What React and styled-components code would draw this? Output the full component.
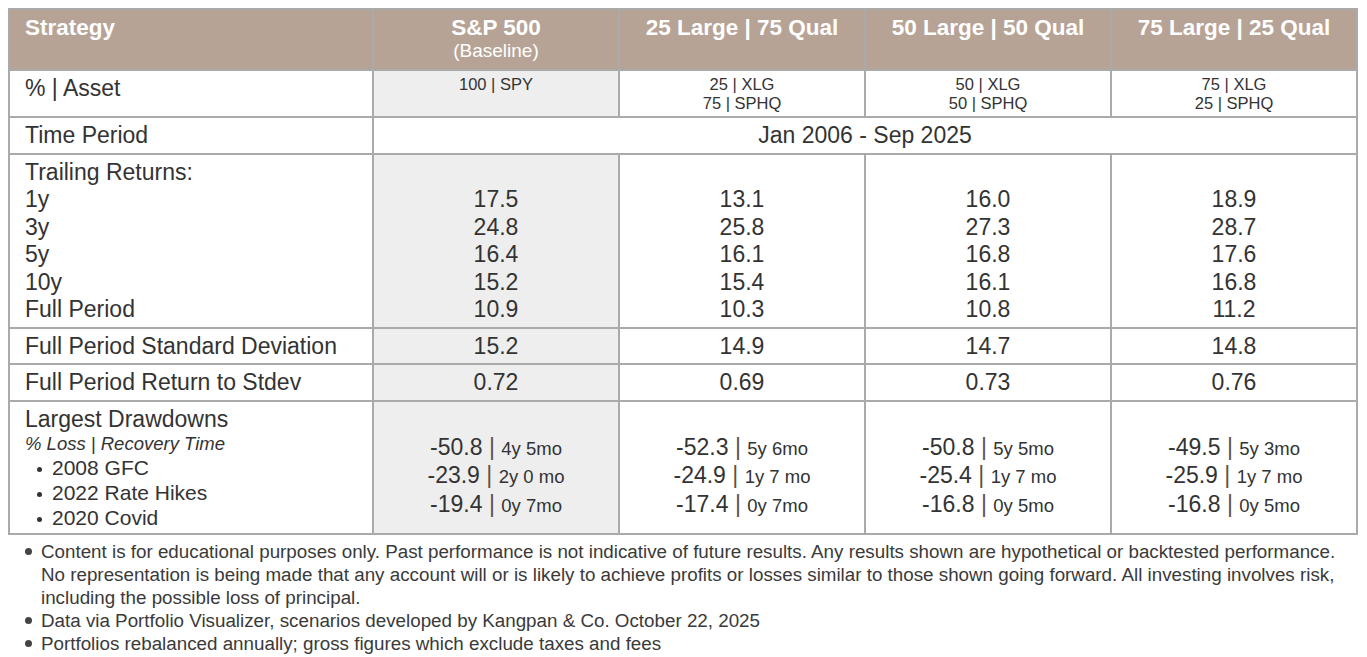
import styled, { createGlobalStyle } from "styled-components";

const GlobalStyle = createGlobalStyle`
  body {
    margin: 8px;
    background: #ffffff;
    font-family: "Liberation Sans", Arial, sans-serif;
    color: #333333;
  }
`;

const strategies = [
  {
    name: "S&P 500",
    sub: "(Baseline)",
    assets: ["100 | SPY"],
    returns: ["17.5", "24.8", "16.4", "15.2", "10.9"],
    stdev: "15.2",
    ratio: "0.72",
    drawdowns: [
      ["-50.8", "4y 5mo"],
      ["-23.9", "2y 0 mo"],
      ["-19.4", "0y 7mo"],
    ],
    baseline: true,
  },
  {
    name: "25 Large | 75 Qual",
    assets: ["25 | XLG", "75 | SPHQ"],
    returns: ["13.1", "25.8", "16.1", "15.4", "10.3"],
    stdev: "14.9",
    ratio: "0.69",
    drawdowns: [
      ["-52.3", "5y 6mo"],
      ["-24.9", "1y 7 mo"],
      ["-17.4", "0y 7mo"],
    ],
  },
  {
    name: "50 Large | 50 Qual",
    assets: ["50 | XLG", "50 | SPHQ"],
    returns: ["16.0", "27.3", "16.8", "16.1", "10.8"],
    stdev: "14.7",
    ratio: "0.73",
    drawdowns: [
      ["-50.8", "5y 5mo"],
      ["-25.4", "1y 7 mo"],
      ["-16.8", "0y 5mo"],
    ],
  },
  {
    name: "75 Large | 25 Qual",
    assets: ["75 | XLG", "25 | SPHQ"],
    returns: ["18.9", "28.7", "17.6", "16.8", "11.2"],
    stdev: "14.8",
    ratio: "0.76",
    drawdowns: [
      ["-49.5", "5y 3mo"],
      ["-25.9", "1y 7 mo"],
      ["-16.8", "0y 5mo"],
    ],
  },
];

const periods = ["1y", "3y", "5y", "10y", "Full Period"];
const events = ["2008 GFC", "2022 Rate Hikes", "2020 Covid"];

const notes = [
  "Content is for educational purposes only. Past performance is not indicative of future results. Any results shown are hypothetical or backtested performance. No representation is being made that any account will or is likely to achieve profits or losses similar to those shown going forward. All investing involves risk, including the possible loss of principal.",
  "Data via Portfolio Visualizer, scenarios developed by Kangpan & Co. October 22, 2025",
  "Portfolios rebalanced annually; gross figures which exclude taxes and fees",
];

const App = () => (
  <>
    <GlobalStyle />
    <Table>
      <colgroup>
        <col style={{ width: 364 }} />
        <col style={{ width: 246 }} />
        <col style={{ width: 246 }} />
        <col style={{ width: 246 }} />
        <col style={{ width: 246 }} />
      </colgroup>
      <thead>
        <tr>
          <HeadCell $left>Strategy</HeadCell>
          {strategies.map((s) => (
            <HeadCell key={s.name}>
              {s.name}
              {s.sub && <HeadSub>{s.sub}</HeadSub>}
            </HeadCell>
          ))}
        </tr>
      </thead>
      <tbody>
        <tr>
          <Label>% | Asset</Label>
          {strategies.map((s) => (
            <AssetCell key={s.name} $shade={s.baseline}>
              {s.assets.map((a) => (
                <div key={a}>{a}</div>
              ))}
            </AssetCell>
          ))}
        </tr>
        <tr>
          <Label>Time Period</Label>
          <ValueCell colSpan={4}>Jan 2006 - Sep 2025</ValueCell>
        </tr>
        <tr>
          <Label>
            <Line>Trailing Returns:</Line>
            {periods.map((p) => (
              <Line key={p}>{p}</Line>
            ))}
          </Label>
          {strategies.map((s) => (
            <ValueCell key={s.name} $shade={s.baseline}>
              <Line>&nbsp;</Line>
              {s.returns.map((r, i) => (
                <Line key={i}>{r}</Line>
              ))}
            </ValueCell>
          ))}
        </tr>
        <tr>
          <Label>Full Period Standard Deviation</Label>
          {strategies.map((s) => (
            <ValueCell key={s.name} $shade={s.baseline}>
              {s.stdev}
            </ValueCell>
          ))}
        </tr>
        <tr>
          <Label>Full Period Return to Stdev</Label>
          {strategies.map((s) => (
            <ValueCell key={s.name} $shade={s.baseline}>
              {s.ratio}
            </ValueCell>
          ))}
        </tr>
        <tr>
          <Label>
            <Line>Largest Drawdowns</Line>
            <SubLabel>% Loss | Recovery Time</SubLabel>
            {events.map((e) => (
              <EventItem key={e}>{e}</EventItem>
            ))}
          </Label>
          {strategies.map((s) => (
            <DrawdownCell key={s.name} $shade={s.baseline}>
              {s.drawdowns.map(([loss, time]) => (
                <Line key={loss + time}>
                  {loss} <Pipe>|</Pipe> <Small>{time}</Small>
                </Line>
              ))}
            </DrawdownCell>
          ))}
        </tr>
      </tbody>
    </Table>
    <Notes>
      {notes.map((n) => (
        <Note key={n}>{n}</Note>
      ))}
    </Notes>
  </>
);

export default App;

const Table = styled.table`
  width: 1349px;
  table-layout: fixed;
  border-collapse: collapse;
  border: 2px solid #aaaaaa;
  color: #333333;
`;

const HeadCell = styled.th`
  background-color: #b6a396;
  color: #ffffff;
  font-size: 22.5px;
  font-weight: 700;
  line-height: 26px;
  padding: 5px 15px 8px;
  vertical-align: top;
  text-align: ${(p) => (p.$left ? "left" : "center")};
  border: 2px solid #aaaaaa;
`;

const HeadSub = styled.div`
  font-size: 19px;
  font-weight: 400;
  line-height: 20px;
`;

const Label = styled.td`
  font-size: 23px;
  line-height: 27.5px;
  padding: 4px 15px 3px;
  vertical-align: top;
  text-align: left;
  border: 2px solid #aaaaaa;
`;

const ValueCell = styled.td`
  font-size: 23px;
  line-height: 27.5px;
  padding: 4px 10px 3px;
  vertical-align: top;
  text-align: center;
  background-color: ${(p) => (p.$shade ? "#eeeeee" : "#ffffff")};
  border: 2px solid #aaaaaa;
`;

const AssetCell = styled(ValueCell)`
  font-size: 16.5px;
  line-height: 19px;
  padding-top: 4px;
`;

const DrawdownCell = styled(ValueCell)`
  padding-top: 32px;
`;

const Line = styled.div`
  white-space: nowrap;
`;

const SubLabel = styled.div`
  font-size: 18.5px;
  font-style: italic;
  line-height: 22px;
`;

const EventItem = styled.div`
  font-size: 21px;
  line-height: 25px;
  padding-left: 27px;
  position: relative;

  &::before {
    content: "";
    position: absolute;
    left: 12px;
    top: 12px;
    width: 5px;
    height: 5px;
    border-radius: 50%;
    background: #333333;
  }
`;

const Pipe = styled.span`
  color: #5e5048;
`;

const Small = styled.span`
  font-size: 18.5px;
`;

const Notes = styled.ul`
  list-style: none;
  width: 1335px;
  box-sizing: border-box;
  margin: 5px 0 0;
  padding: 0 0 0 33px;
  font-size: 18.8px;
  line-height: 23px;
  color: #3a3a3a;
`;

const Note = styled.li`
  position: relative;

  &::before {
    content: "";
    position: absolute;
    left: -16px;
    top: 8px;
    width: 7px;
    height: 7px;
    border-radius: 50%;
    background: #444444;
  }
`;
